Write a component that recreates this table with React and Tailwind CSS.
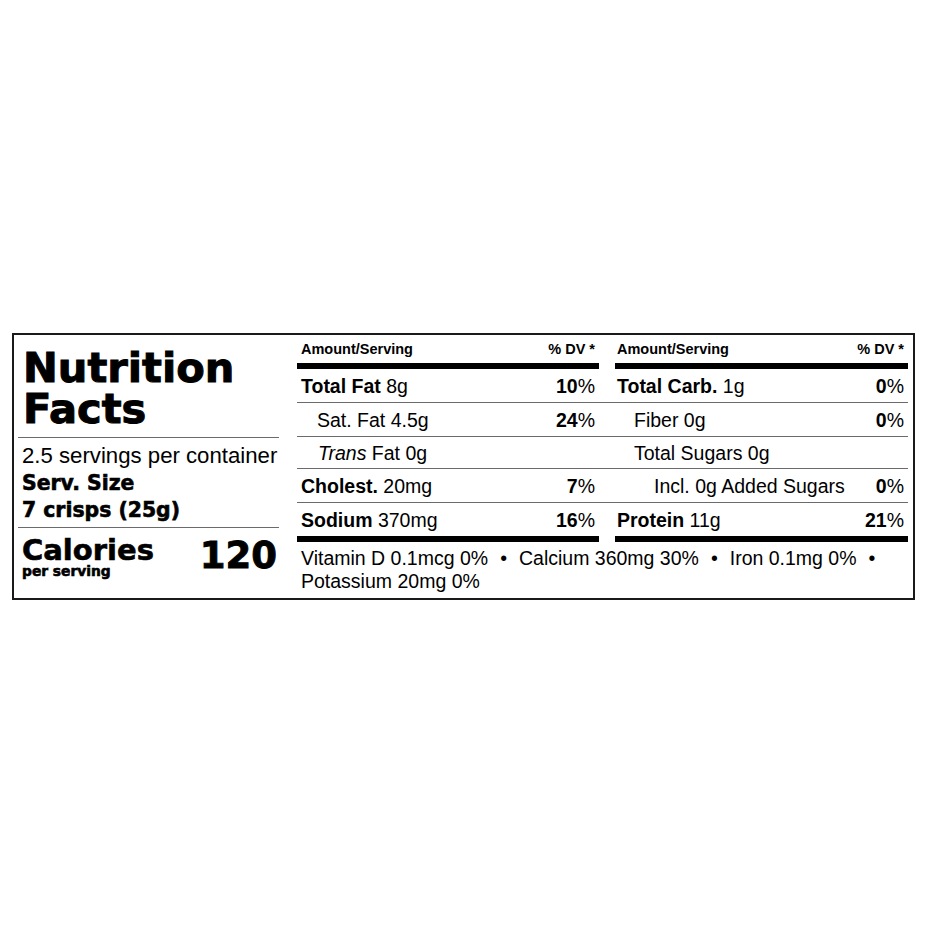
import React from "react";

const sans = "font-['Liberation_Sans',Arial,sans-serif]";
const heavy = "font-['DejaVu_Sans',sans-serif] font-bold [-webkit-text-stroke:0.6px_black]";

function Row({ h, border = true, left, right }) {
  return (
    <div className={`flex ${h} ${border ? "border-b border-[#6b6b6b]" : ""}`}>
      <div className="w-[302px] pl-[4px] pr-[4px] flex items-center justify-between">{left}</div>
      <div className="w-[16px]" />
      <div className="flex-1 pl-[2px] pr-[4px] flex items-center justify-between">{right}</div>
    </div>
  );
}

export default function App() {
  return (
    <div className={`w-[926px] h-[926px] bg-white pt-[333px] pl-[12px] ${sans} text-black`}>
      <div className="w-[903px] h-[267px] border-2 border-[#1a1a1a] flex">
        {/* Left column */}
        <div className="w-[261px] ml-[4px] flex flex-col">
          <div className={`${heavy} text-[41.6px] leading-[41px] h-[102px] pt-[12px] pl-[5px] [-webkit-text-stroke:1px_black]`}>
            <div>Nutrition</div>
            <div>Facts</div>
          </div>
          <div className="h-px bg-[#6b6b6b]" />
          <div className="h-[89px] pl-[4px] pt-[3px]">
            <div className="text-[22.2px] leading-[29px]">2.5 servings per container</div>
            <div className={`${heavy} text-[20.4px] leading-[27px]`}>Serv. Size</div>
            <div className={`${heavy} text-[20.4px] leading-[27px]`}>7 crisps (25g)</div>
          </div>
          <div className="h-px bg-[#6b6b6b]" />
          <div className="flex items-start justify-between pl-[4px] pr-[2px] pt-[8px]">
            <div className="flex flex-col">
              <div className={`${heavy} text-[29px] leading-[28px]`}>Calories</div>
              <div className={`${heavy} text-[13.8px] leading-[15px] [-webkit-text-stroke:0.3px_black]`}>per serving</div>
            </div>
            <div className={`${heavy} text-[37px] leading-[36px] pt-[2px] [-webkit-text-stroke:0.9px_black]`}>120</div>
          </div>
        </div>

        <div className="w-[18px]" />

        {/* Right part */}
        <div className="w-[611px] flex flex-col">
          <div className="flex h-[28px] pt-[5px] text-[14.5px] font-bold leading-[18px]">
            <div className="w-[302px] pl-[4px] pr-[4px] flex justify-between">
              <span>Amount/Serving</span>
              <span>% DV *</span>
            </div>
            <div className="w-[16px]" />
            <div className="flex-1 pl-[2px] pr-[4px] flex justify-between">
              <span>Amount/Serving</span>
              <span>% DV *</span>
            </div>
          </div>
          <div className="flex h-[6px]">
            <div className="w-[302px] bg-black" />
            <div className="w-[16px]" />
            <div className="flex-1 bg-black" />
          </div>
          <div className="text-[19.5px] leading-[24px]">
            <Row
              h="h-[34px]"
              left={<><span><b>Total Fat</b> 8g</span><span><b>10</b>%</span></>}
              right={<><span><b>Total Carb.</b> 1g</span><span><b>0</b>%</span></>}
            />
            <Row
              h="h-[34px]"
              left={<><span className="pl-[16px]">Sat. Fat 4.5g</span><span><b>24</b>%</span></>}
              right={<><span className="pl-[17px]">Fiber 0g</span><span><b>0</b>%</span></>}
            />
            <Row
              h="h-[32px]"
              left={<><span className="pl-[17px]"><i>Trans</i> Fat 0g</span><span /></>}
              right={<><span className="pl-[17px]">Total Sugars 0g</span><span /></>}
            />
            <Row
              h="h-[34px]"
              left={<><span><b>Cholest.</b> 20mg</span><span><b>7</b>%</span></>}
              right={<><span className="pl-[37px]">Incl. 0g Added Sugars</span><span><b>0</b>%</span></>}
            />
            <Row
              h="h-[33px]"
              border={false}
              left={<><span><b>Sodium</b> 370mg</span><span><b>16</b>%</span></>}
              right={<><span><b>Protein</b> 11g</span><span><b>21</b>%</span></>}
            />
          </div>
          <div className="flex h-[6px]">
            <div className="w-[302px] bg-black" />
            <div className="w-[16px]" />
            <div className="flex-1 bg-black" />
          </div>
          <div className="pl-[4px] pr-[4px] pt-[5px] text-[19.5px] leading-[23px]">
            Vitamin D 0.1mcg 0%<span className="mx-[12px]">•</span>Calcium 360mg 30%<span className="mx-[12px]">•</span>Iron 0.1mg 0%<span className="mx-[12px]">•</span> Potassium 20mg 0%
          </div>
        </div>
      </div>
    </div>
  );
}
